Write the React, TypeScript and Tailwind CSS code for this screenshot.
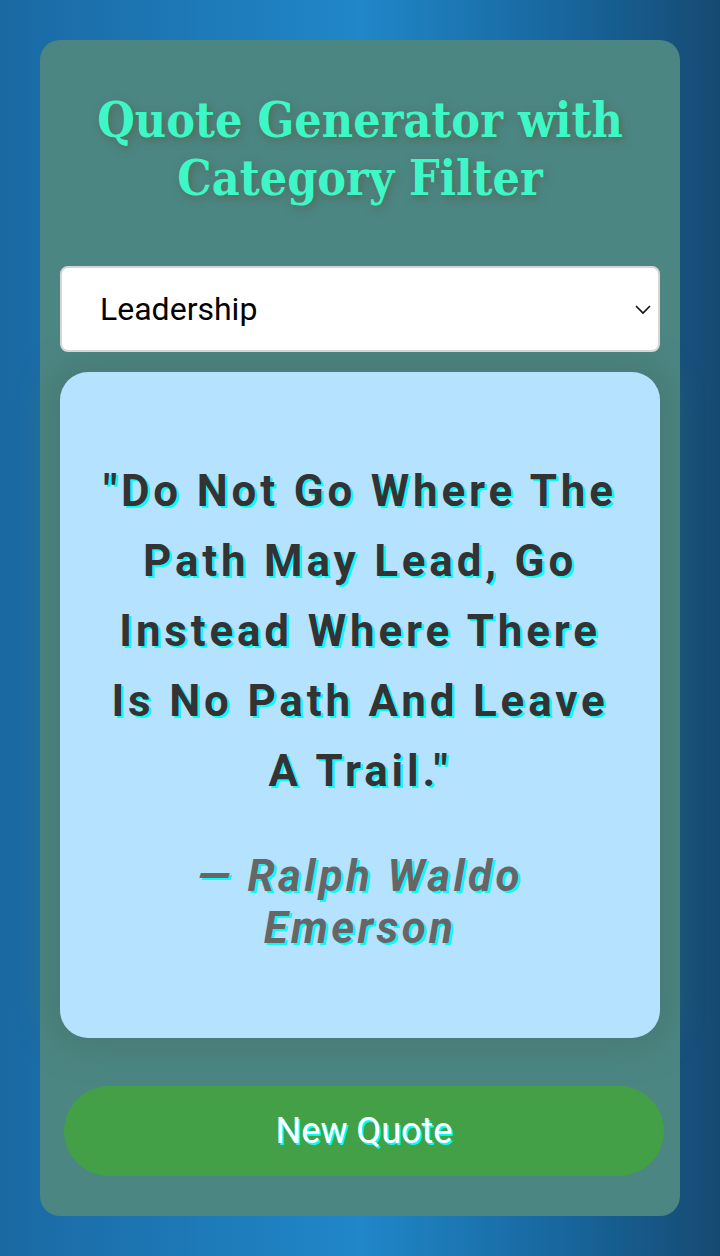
import { useState } from "react";

const quotes: Record<string, { text: string; author: string }> = {
	Leadership: {
		text: "\"Do Not Go Where The Path May Lead, Go Instead Where There Is No Path And Leave A Trail.\"",
		author: "— Ralph Waldo Emerson",
	},
};

export default function App() {
	const [category, setCategory] = useState("Leadership");
	const quote = quotes[category] ?? quotes.Leadership;

	return (
		<div className="min-h-[1256px] w-full bg-[linear-gradient(to_right,#1a69a3_0%,#2087c8_50%,#17649a_80%,#164a72_100%)] p-10 font-['Roboto',sans-serif]">
			<div className="flex flex-col rounded-[20px] bg-[#4b8683] px-5 pt-[51px] pb-10">
				<h1 className="text-center font-['DejaVu_Serif',serif] text-[48px] leading-[58px] font-bold text-[#3ef7c6] [font-stretch:condensed] [text-shadow:2px_3px_8px_rgba(90,100,80,0.9)]">
					Quote Generator with Category Filter
				</h1>

				<div className="relative mt-[59px]">
					<select
						value={category}
						onChange={(e) => setCategory(e.target.value)}
						className="h-[86px] w-full appearance-none rounded-lg border-2 border-[#d6d6d6] bg-white pl-[38px] text-[32px] text-black outline-none">
						<option>Leadership</option>
						<option>Motivation</option>
						<option>Life</option>
					</select>
					<svg
						className="pointer-events-none absolute top-[37px] right-[8px]"
						width="18"
						height="12"
						viewBox="0 0 18 12"
						fill="none">
						<path d="M2 3l7 7 7-7" stroke="#111" strokeWidth="1.6" />
					</svg>
				</div>

				<div className="mt-5 flex h-[666px] flex-col items-center justify-center rounded-[28px] bg-[#b5e2fe] px-10 shadow-[0_0_30px_14px_rgba(70,110,100,0.45)]">
					<p className="text-center text-[44px] leading-[70px] font-bold tracking-[3.8px] text-[#333] [text-shadow:2px_2px_0_#00ffff]">
						{quote.text}
					</p>
					<p className="mt-[44px] text-center text-[44px] leading-[52px] font-bold tracking-[3.3px] text-[#666] italic [text-shadow:2px_2px_0_#00ffff]">
						{quote.author}
					</p>
				</div>

				<button className="mt-12 ml-1 h-[90px] w-full rounded-full bg-[#43a047] text-[36px] text-white [text-shadow:2px_2px_0_#00ffff]">
					New Quote
				</button>
			</div>
		</div>
	);
}
